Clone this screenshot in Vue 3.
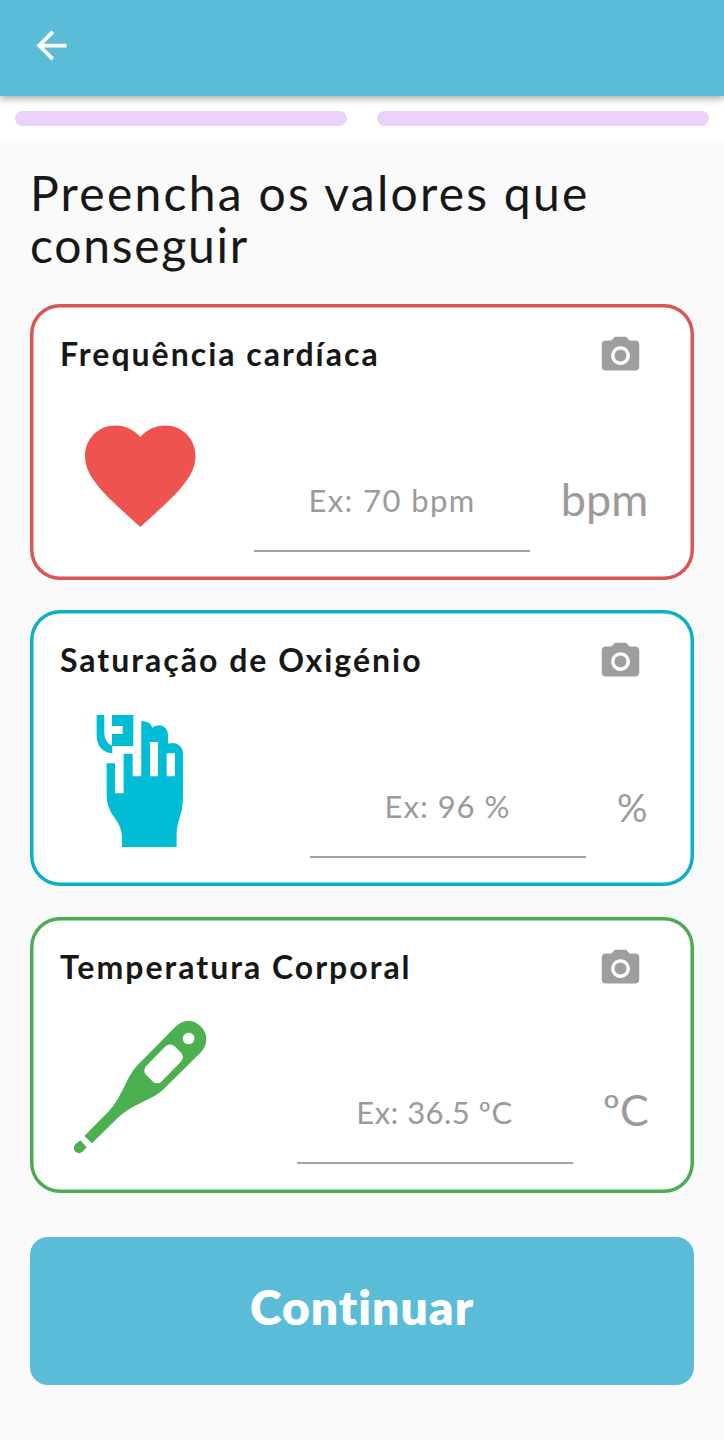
<script setup>
const cards = [
  { id: 'heart', title: 'Frequência cardíaca', hint: 'Ex: 70 bpm', unit: 'bpm' },
  { id: 'oxygen', title: 'Saturação de Oxigénio', hint: 'Ex: 96 %', unit: '%' },
  { id: 'temp', title: 'Temperatura Corporal', hint: 'Ex: 36.5 ºC', unit: 'ºC' },
]
</script>

<template>
  <div class="screen">
    <header class="bar">
      <svg class="back" viewBox="0 0 24 24"><path d="M20 11H7.83l5.59-5.59L12 4l-8 8 8 8 1.41-1.41L7.83 13H20v-2z" /></svg>
    </header>
    <div class="progress"><span></span><span></span></div>
    <h1>Preencha os valores que<br /><span class="line2">conseguir</span></h1>

    <main class="cards">
      <section v-for="card in cards" :key="card.id" class="card" :class="card.id">
        <div class="head">
          <h2>{{ card.title }}</h2>
          <svg class="camera" viewBox="0 0 24 24">
            <circle cx="12" cy="12" r="3.2" />
            <path d="M9 2L7.17 4H4c-1.1 0-2 .9-2 2v12c0 1.1.9 2 2 2h16c1.1 0 2-.9 2-2V6c0-1.1-.9-2-2-2h-3.17L15 2H9zm3 15c-2.76 0-5-2.24-5-5s2.24-5 5-5 5 2.24 5 5-2.24 5-5 5z" />
          </svg>
        </div>
        <div class="body">
          <svg v-if="card.id === 'heart'" class="icon" viewBox="0 0 24 24">
            <path d="M12 21.35l-1.45-1.32C5.4 15.36 2 12.28 2 8.5 2 5.42 4.42 3 7.5 3c1.74 0 3.41.81 4.5 2.09C13.09 3.81 14.76 3 16.5 3 19.58 3 22 5.42 22 8.5c0 3.78-3.4 6.86-8.55 11.54L12 21.35z" />
          </svg>
          <svg v-else-if="card.id === 'oxygen'" class="icon" viewBox="-18 45 398 398">
            <path d="M50 45H73V100Q74 128 97 138V160Q50 154 50 104Z" />
            <path d="M96 45H160V138H96V102H128V78H96Z" />
            <path fill-rule="evenodd" d="M80 190H105V280H131V161H158V229H184V64Q209 61 217 83Q225 76 240 76Q262 80 264 103V131Q300 122 309 155V290Q309 325 300 350Q290 380 290 405V442H126V410Q124 380 105 355Q80 325 80 285ZM210 126V229H234V126ZM260 160V229H285V160Z" />
          </svg>
          <svg v-else class="icon" viewBox="42 48 398 398">
            <path fill-rule="evenodd" d="M348 64C370 43 402 43 422 64C446 87 444 120 423 142L314 250C280 284 232 292 190 325Q178 334 169 343L96 415L73 393L147 318C180 285 195 232 220 196Q226 187 234 179ZM386 83a17.500 17.500 0 1 0 .1 0ZM317 124Q331 113 344 124L364 144Q374 156 364 169L304 230Q292 240 279 230L258 209Q248 197 258 184Z" />
            <path d="M61 406L80 427L68 440Q57 450 46 440Q37 429 46 418Z" />
          </svg>
          <div class="field"><span class="hint">{{ card.hint }}</span></div>
          <span class="unit">{{ card.unit }}</span>
        </div>
      </section>
    </main>

    <button class="next"><span>Continuar</span></button>
  </div>
</template>

<style>
body { background: #fafafa; }
</style>

<style scoped>
.screen {
  height: 1440px;
  overflow: hidden;
  background: #fafafa;
  font-family: Lato, "Liberation Sans", sans-serif;
  color: #171717;
}
.bar {
  position: relative;
  display: flex;
  height: 96px;
  box-sizing: border-box;
  padding: 22.5px 0 0 29px;
  background: #5bbcd7;
  box-shadow: 0 3px 7px rgba(0, 0, 0, 0.32);
}
.back { width: 45px; height: 45px; fill: #fff; }
.progress {
  display: flex;
  gap: 29.5px;
  height: 45px;
  box-sizing: border-box;
  padding: 15px 15px 0;
  background: #fff;
}
.progress span { flex: 1; height: 15px; border-radius: 8px; background: #ecd2fb; }
h1 {
  margin: 26px 0 0 30px;
  height: 104px;
  font-size: 48px;
  font-weight: 400;
  line-height: 52px;
  letter-spacing: 2.25px;
  white-space: nowrap;
}
.line2 { letter-spacing: 1.75px; }
.cards { display: flex; flex-direction: column; gap: 30.300px; margin: 33px 30px 0; }
.card {
  height: 276px;
  box-sizing: border-box;
  padding: 29px 0 0 30px;
  border-radius: 30px;
  background: #fff;
  box-shadow: inset 0 0 0 3.5px var(--edge);
}
.heart { --edge: #db5553; --fill: #ef5350; --unit: 87px; }
.oxygen { --edge: #0cb0c6; --fill: #00bcd4; --unit: 31.5px; }
.temp { --edge: #4fab53; --fill: #4caf50; --unit: 44.5px; }
.head { display: flex; justify-content: space-between; height: 75.500px; padding-right: 51px; }
h2 { margin: 0; padding-top: 1px; font-size: 32px; font-weight: 700; line-height: 40px; letter-spacing: 2px; white-space: nowrap; }
.camera { width: 45px; height: 45px; fill: #9e9e9e; }
.body { display: flex; align-items: flex-start; padding: 0 46px 0 14px; }
.icon { width: 132.600px; height: 132.600px; fill: var(--fill); }
.field {
  width: 276px;
  height: 143px;
  box-sizing: border-box;
  margin-left: auto;
  padding-top: 71px;
  border-bottom: 2px solid #a3a3a3;
  text-align: center;
}
.hint, .unit { display: block; color: #9b9b9b; white-space: nowrap; }
.hint { font-size: 31px; line-height: 40px; letter-spacing: 1.4px; }
.temp .hint { letter-spacing: 0.45px; }
.oxygen .hint { letter-spacing: 1px; }
.unit {
  display: flex;
  justify-content: center;
  width: var(--unit);
  margin-left: 31px;
  padding-top: 65px;
  font-size: 45px;
  line-height: 50px;
}
.oxygen .unit { padding-top: 67px; font-size: 38px; }
.temp .unit { padding-top: 64px; font-size: 43px; }
.next {
  display: flex;
  align-items: center;
  justify-content: center;
  width: 664px;
  height: 148px;
  margin: 44.400px 30px 0;
  padding: 0 0 8px;
  border: 0;
  border-radius: 18px;
  background: #5bbcd7;
  color: #fff;
  font-family: inherit;
  font-size: 48px;
  font-weight: 800;
  line-height: 56px;
  letter-spacing: 1px;
}
</style>
